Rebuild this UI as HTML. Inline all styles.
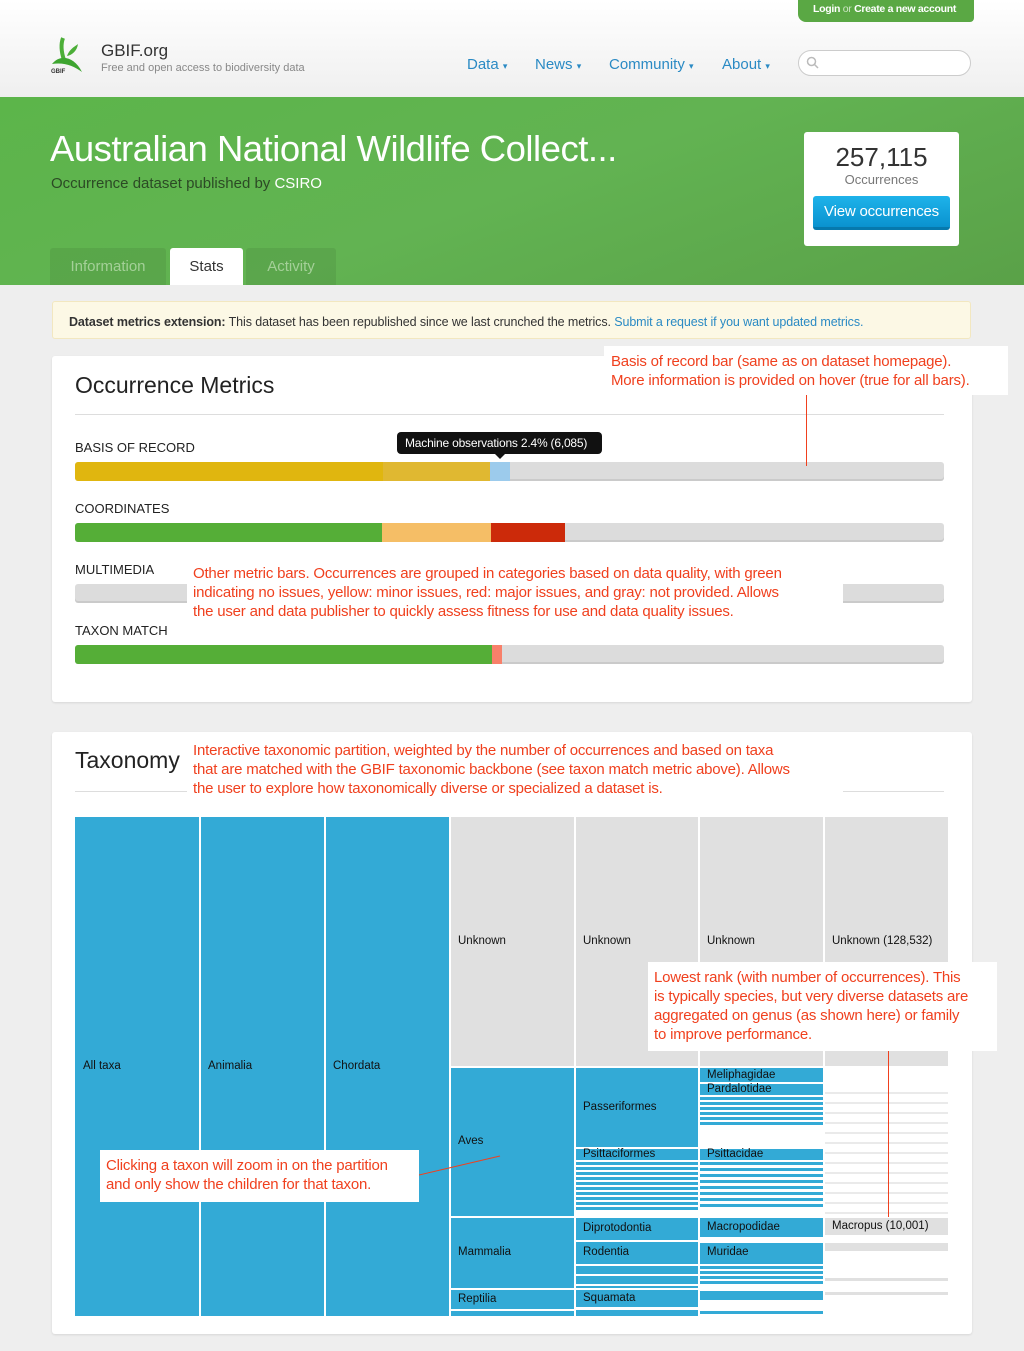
<!DOCTYPE html>
<html><head><meta charset="utf-8"><style>
*{margin:0;padding:0;box-sizing:border-box}
body{width:1024px;height:1351px;background:#eee;font-family:"Liberation Sans",sans-serif;position:relative;overflow:hidden;color:#333}
.a{position:absolute}
.ann{position:absolute;background:#fff;color:#f0401e;font-size:15px;line-height:19px;letter-spacing:-0.2px;white-space:nowrap}
.lbl{position:absolute;font-size:13px;color:#222}
.bar{position:absolute;left:75px;width:869px;height:19px;background:#dcdcdc;border-radius:3px;overflow:hidden;box-shadow:inset 0 -2px 0 rgba(0,0,0,.08)}
.bar div{position:absolute;top:0;height:19px}
.b{position:absolute;background:#33aad6}
.g{position:absolute;background:#e0e0e0}
.t{position:absolute;font-size:11.5px;color:#111}
</style></head><body>
<div class="a" style="left:0;top:0;width:1024px;height:97px;background:linear-gradient(#fff,#efefef)"></div>
<div class="a" style="left:798px;top:0;width:176px;height:22px;background:#5aa844;border-radius:0 0 4px 8px;color:#fff;font-size:10.5px;font-weight:bold;padding:3px 0 0 15px;letter-spacing:-0.3px">Login <span style="color:#cde6c4;font-weight:normal">or</span> Create a new account</div>
<svg class="a" style="left:50px;top:36px" width="42" height="40" viewBox="0 0 42 40"><path d="M13 2 C10 10 12 18 14 24" stroke="#4cae38" stroke-width="4" fill="none"/><path d="M17 20 C20 12 26 10 28 8 C27 15 22 19 17 20Z" fill="#4cae38"/><path d="M2 28 C10 18 24 20 32 36 C24 30 14 26 2 28Z" fill="#3ea530"/><text x="1" y="37" font-size="6" font-weight="bold" fill="#333" font-family="Liberation Sans">GBIF</text></svg>
<div class="a" style="left:101px;top:41px;font-size:17px;color:#333">GBIF.org</div>
<div class="a" style="left:101px;top:62px;font-size:11px;color:#888">Free and open access to biodiversity data</div>
<div class="a" style="left:467px;top:56px;font-size:15px;color:#2a8ac4">Data <small style="font-size:9px">▾</small></div>
<div class="a" style="left:535px;top:56px;font-size:15px;color:#2a8ac4">News <small style="font-size:9px">▾</small></div>
<div class="a" style="left:609px;top:56px;font-size:15px;color:#2a8ac4">Community <small style="font-size:9px">▾</small></div>
<div class="a" style="left:722px;top:56px;font-size:15px;color:#2a8ac4">About <small style="font-size:9px">▾</small></div>
<div class="a" style="left:798px;top:50px;width:173px;height:26px;border:1px solid #ccc;border-radius:13px;background:#fff"></div>
<svg class="a" style="left:806px;top:56px" width="14" height="14"><circle cx="5.5" cy="5.5" r="4" stroke="#bbb" stroke-width="1.5" fill="none"/><path d="M8.5 8.5 L12 12" stroke="#bbb" stroke-width="1.5"/></svg>
<div class="a" style="left:0;top:97px;width:1024px;height:188px;background:linear-gradient(160deg,#5cb54a 0%,#62b352 50%,#5aa148 100%)"></div>
<div class="a" style="left:50px;top:128px;font-size:36.5px;color:#fff;letter-spacing:-0.5px">Australian National Wildlife Collect...</div>
<div class="a" style="left:51px;top:175px;font-size:15px;color:#2c4a25">Occurrence dataset published by <span style="color:#fff">CSIRO</span></div>
<div class="a" style="left:804px;top:132px;width:155px;height:114px;background:#fff;border-radius:3px"></div>
<div class="a" style="left:804px;top:142px;width:155px;text-align:center;font-size:26px;color:#333">257,115</div>
<div class="a" style="left:804px;top:172px;width:155px;text-align:center;font-size:13px;color:#777">Occurrences</div>
<div class="a" style="left:813px;top:196px;width:137px;height:34px;background:linear-gradient(#1eb3ea,#0a92cf);border-bottom:3px solid #0679ad;border-radius:3px;color:#fff;font-size:15px;text-align:center;padding-top:7px;letter-spacing:-0.2px">View occurrences</div>
<div class="a" style="left:50px;top:248px;width:116px;height:37px;background:rgba(0,0,0,.07);color:#a4d098;font-size:15px;text-align:center;padding-top:10px;border-radius:3px 3px 0 0">Information</div>
<div class="a" style="left:170px;top:248px;width:73px;height:37px;background:#fff;color:#333;font-size:15px;text-align:center;padding-top:10px;border-radius:3px 3px 0 0">Stats</div>
<div class="a" style="left:246px;top:248px;width:90px;height:37px;background:rgba(0,0,0,.07);color:#a4d098;font-size:15px;text-align:center;padding-top:10px;border-radius:3px 3px 0 0">Activity</div>
<div class="a" style="left:52px;top:301px;width:919px;height:38px;background:#fcf8e5;border:1px solid #f2e7c0;border-radius:3px;font-size:12.5px;padding:13px 0 0 16px;color:#333;letter-spacing:-0.1px"><b>Dataset metrics extension:</b> This dataset has been republished since we last crunched the metrics. <span style="color:#2a8ac4">Submit a request if you want updated metrics.</span></div>
<div class="a" style="left:52px;top:356px;width:920px;height:346px;background:#fff;border-radius:3px;box-shadow:0 1px 2px rgba(0,0,0,.1)"></div>
<div class="a" style="left:75px;top:372px;font-size:23px;color:#222">Occurrence Metrics</div>
<div class="a" style="left:75px;top:414px;width:869px;height:1px;background:#ddd"></div>
<div class="lbl" style="left:75px;top:440px">BASIS OF RECORD</div>
<div class="bar" style="top:462px"><div style="left:0;width:308px;background:#e0b60f"></div><div style="left:308px;width:107px;background:#e0b831"></div><div style="left:415px;width:20px;background:#9ccbec"></div></div>
<div class="a" style="left:397px;top:432px;width:205px;height:22px;background:#111;border-radius:4px;color:#fff;font-size:12px;padding:4px 0 0 8px;letter-spacing:-0.2px">Machine observations 2.4% (6,085)</div>
<div class="a" style="left:495px;top:454px;border:5px solid transparent;border-top-color:#111"></div>
<div class="lbl" style="left:75px;top:501px">COORDINATES</div>
<div class="bar" style="top:523px"><div style="left:0;width:307px;background:#55ae37"></div><div style="left:307px;width:109px;background:#f5be66"></div><div style="left:416px;width:74px;background:#cc2a0a"></div></div>
<div class="lbl" style="left:75px;top:562px">MULTIMEDIA</div>
<div class="bar" style="top:584px"></div>
<div class="lbl" style="left:75px;top:623px">TAXON MATCH</div>
<div class="bar" style="top:645px"><div style="left:0;width:417px;background:#55ae37"></div><div style="left:417px;width:10px;background:#f8806a"></div></div>
<div class="ann" style="left:187px;top:564px;width:656px;padding-left:6px;height:60px">Other metric bars. Occurrences are grouped in categories based on data quality, with green<br>indicating no issues, yellow: minor issues, red: major issues, and gray: not provided. Allows<br>the user and data publisher to quickly assess fitness for use and data quality issues.</div>
<div class="ann" style="left:604px;top:346px;width:404px;height:49px;padding:6px 0 0 7px">Basis of record bar (same as on dataset homepage).<br>More information is provided on hover (true for all bars).</div>
<div class="a" style="left:806px;top:395px;width:1px;height:71px;background:#f0401e"></div>
<div class="a" style="left:52px;top:732px;width:920px;height:602px;background:#fff;border-radius:3px;box-shadow:0 1px 2px rgba(0,0,0,.1)"></div>
<div class="a" style="left:75px;top:747px;font-size:23px;color:#222">Taxonomy</div>
<div class="a" style="left:75px;top:791px;width:869px;height:1px;background:#ddd"></div>
<div class="ann" style="left:187px;top:741px;width:656px;padding-left:6px;height:58px">Interactive taxonomic partition, weighted by the number of occurrences and based on taxa<br>that are matched with the GBIF taxonomic backbone (see taxon match metric above). Allows<br>the user to explore how taxonomically diverse or specialized a dataset is.</div>
<div class="b" style="left:75px;top:817px;width:124px;height:499px"></div>
<div class="b" style="left:201px;top:817px;width:123px;height:499px"></div>
<div class="b" style="left:326px;top:817px;width:123px;height:499px"></div>
<div class="t" style="left:83px;top:1060px">All taxa</div>
<div class="t" style="left:208px;top:1060px">Animalia</div>
<div class="t" style="left:333px;top:1060px">Chordata</div>
<div class="g" style="left:451px;top:817px;width:123px;height:249px"></div>
<div class="g" style="left:576px;top:817px;width:122px;height:249px"></div>
<div class="g" style="left:700px;top:817px;width:123px;height:249px"></div>
<div class="g" style="left:825px;top:817px;width:123px;height:249px"></div>
<div class="t" style="left:458px;top:935px">Unknown</div>
<div class="t" style="left:583px;top:935px">Unknown</div>
<div class="t" style="left:707px;top:935px">Unknown</div>
<div class="t" style="left:832px;top:935px">Unknown (128,532)</div>
<div class="b" style="left:451px;top:1068px;width:123px;height:148px"></div>
<div class="t" style="left:458px;top:1135px">Aves</div>
<div class="b" style="left:451px;top:1218px;width:123px;height:70px"></div>
<div class="t" style="left:458px;top:1246px">Mammalia</div>
<div class="b" style="left:451px;top:1290px;width:123px;height:19px"></div>
<div class="t" style="left:458px;top:1293px">Reptilia</div>
<div class="b" style="left:451px;top:1311px;width:123px;height:5px"></div>
<div class="b" style="left:576px;top:1068px;width:122px;height:79px"></div>
<div class="t" style="left:583px;top:1101px">Passeriformes</div>
<div class="b" style="left:576px;top:1149px;width:122px;height:11px"></div>
<div class="t" style="left:583px;top:1148px">Psittaciformes</div>
<div class="a" style="left:576px;top:1162px;width:122px;height:48px;background:repeating-linear-gradient(#33aad6 0 3px,#fff 3px 5px)"></div>
<div class="b" style="left:576px;top:1218px;width:122px;height:22px"></div>
<div class="t" style="left:583px;top:1222px">Diprotodontia</div>
<div class="b" style="left:576px;top:1242px;width:122px;height:22px"></div>
<div class="t" style="left:583px;top:1246px">Rodentia</div>
<div class="a" style="left:576px;top:1266px;width:122px;height:22px;background:repeating-linear-gradient(#33aad6 0 8px,#fff 8px 10px)"></div>
<div class="b" style="left:576px;top:1290px;width:122px;height:17px"></div>
<div class="t" style="left:583px;top:1292px">Squamata</div>
<div class="b" style="left:576px;top:1310px;width:122px;height:6px"></div>
<div class="b" style="left:700px;top:1068px;width:123px;height:14px"></div>
<div class="t" style="left:707px;top:1069px">Meliphagidae</div>
<div class="b" style="left:700px;top:1084px;width:123px;height:11px"></div>
<div class="t" style="left:707px;top:1083px">Pardalotidae</div>
<div class="a" style="left:700px;top:1097px;width:123px;height:28px;background:repeating-linear-gradient(#33aad6 0 3px,#fff 3px 5px)"></div>
<div class="b" style="left:700px;top:1149px;width:123px;height:11px"></div>
<div class="t" style="left:707px;top:1148px">Psittacidae</div>
<div class="a" style="left:700px;top:1162px;width:123px;height:46px;background:repeating-linear-gradient(#33aad6 0 3px,#fff 3px 6px)"></div>
<div class="b" style="left:700px;top:1218px;width:123px;height:19px"></div>
<div class="t" style="left:707px;top:1221px">Macropodidae</div>
<div class="b" style="left:700px;top:1243px;width:123px;height:21px"></div>
<div class="t" style="left:707px;top:1246px">Muridae</div>
<div class="a" style="left:700px;top:1266px;width:123px;height:20px;background:repeating-linear-gradient(#33aad6 0 3px,#fff 3px 5px)"></div>
<div class="b" style="left:700px;top:1291px;width:123px;height:9px"></div>
<div class="b" style="left:700px;top:1311px;width:123px;height:3px"></div>
<div class="a" style="left:825px;top:1084px;width:123px;height:130px;background:repeating-linear-gradient(#fff 0 8px,#eaeaea 8px 10px)"></div>
<div class="g" style="left:825px;top:1218px;width:123px;height:17px"></div>
<div class="t" style="left:832px;top:1220px">Macropus (10,001)</div>
<div class="g" style="left:825px;top:1243px;width:123px;height:8px"></div>
<div class="g" style="left:825px;top:1278px;width:123px;height:3px"></div>
<div class="g" style="left:825px;top:1292px;width:123px;height:3px"></div>
<div class="ann" style="left:648px;top:962px;width:349px;height:89px;padding:6px 0 0 6px">Lowest rank (with number of occurrences). This<br>is typically species, but very diverse datasets are<br>aggregated on genus (as shown here) or family<br>to improve performance.</div>
<div class="a" style="left:888px;top:1051px;width:1px;height:166px;background:#f0401e"></div>
<div class="ann" style="left:100px;top:1150px;width:319px;height:52px;padding:6px 0 0 6px">Clicking a taxon will zoom in on the partition<br>and only show the children for that taxon.</div>
<svg class="a" style="left:419px;top:1155px" width="82" height="22"><path d="M0 20 L81 1" stroke="#f0401e" stroke-width="1"/></svg>
</body></html>
